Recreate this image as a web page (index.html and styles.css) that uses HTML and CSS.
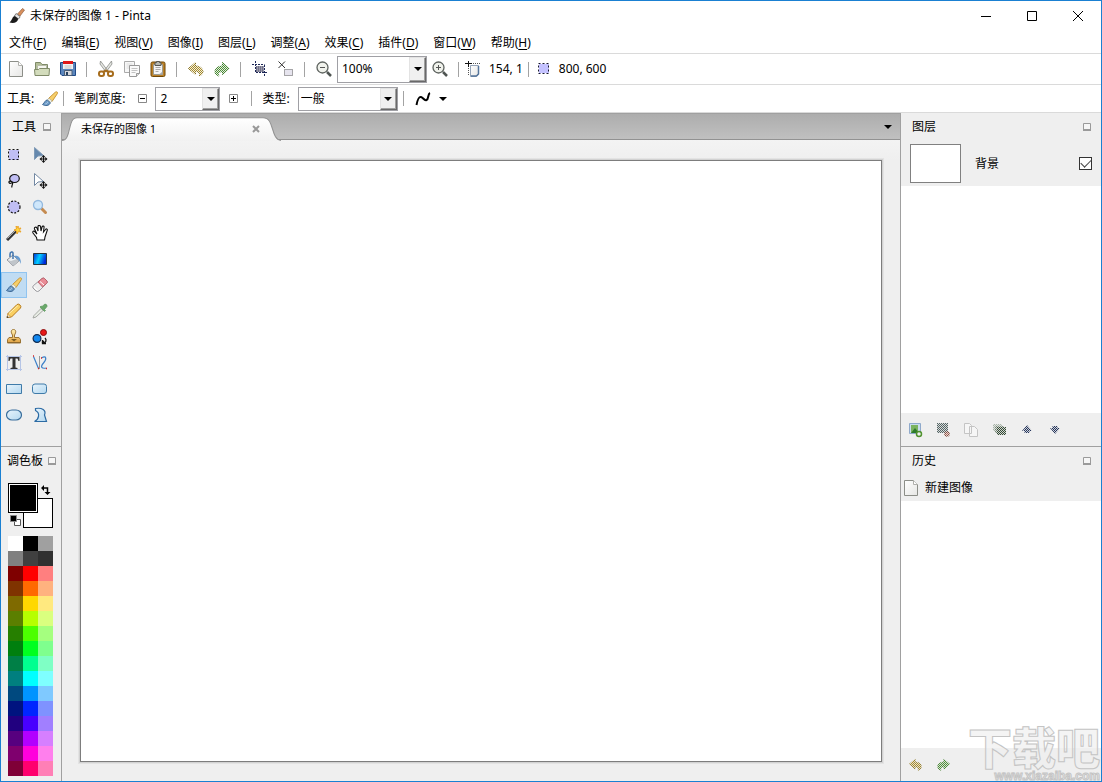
FILE: index.html
```html
<!DOCTYPE html>
<html lang="zh-CN">
<head>
<meta charset="utf-8">
<title>未保存的图像 1 - Pinta</title>
<link rel="stylesheet" href="styles.css">
</head>
<body>
<svg class="defs" aria-hidden="true">
  <defs>
    <linearGradient id="g-page" x1="0" y1="0" x2="1" y2="1"><stop offset="0" stop-color="#fff"/><stop offset="1" stop-color="#e6e6e4"/></linearGradient>
    <linearGradient id="g-tab" x1="0" y1="0" x2="0" y2="1"><stop offset="0" stop-color="#fff"/><stop offset="1" stop-color="#f1f1f1"/></linearGradient>
    <linearGradient id="g-blue" x1="0" y1="0" x2="1" y2=".3"><stop offset="0" stop-color="#0028d8"/><stop offset=".5" stop-color="#00d0ff"/><stop offset="1" stop-color="#0028d8"/></linearGradient>
    <linearGradient id="g-shape" x1="0" y1="0" x2="1" y2="1"><stop offset="0" stop-color="#e8f4fc"/><stop offset="1" stop-color="#b4d8f0"/></linearGradient>
    <linearGradient id="g-gold" x1="0" y1="0" x2="0" y2="1"><stop offset="0" stop-color="#fff0b0"/><stop offset="1" stop-color="#e0a040"/></linearGradient>
  </defs>
  <symbol id="i-page" viewBox="0 0 16 16"><path d="M1.500 .5h9l4 4v11h-13z" fill="url(#g-page)" stroke="#8c8e88"/><path d="M10.500 .5v4h4" fill="#fff" stroke="#b0b0ac"/></symbol>
  <symbol id="i-undo" viewBox="0 0 16 16"><path d="M.5 7.500 7.500 1.500v3.500C12 5 15 7.500 15 10.500c0 2-1.500 4-4 4.500 1.500-2 0-4.500-3.500-4.500v3z" fill="#a98c28" stroke="#86701c"/></symbol>
  <symbol id="i-redo" viewBox="0 0 16 16"><path d="M15.500 7.500 8.500 1.500v3.500C4 5 1 7.500 1 10.500c0 2 1.500 4 4 4.500-1.500-2 0-4.500 3.500-4.500v3z" fill="#4f9038" stroke="#3a7a26"/></symbol>
  <symbol id="i-brush" viewBox="0 0 16 16"><path d="M13.300 1.200c1.700-1 2.700 0 2 1.500L10 10.500 6.500 7.500z" fill="#f7cf6a" stroke="#c99738"/><path d="m5.500 8.800 2.900 2.600 1.800-1.400-3.200-2.700z" fill="#f2f2e6" stroke="#a8a898" stroke-width=".6"/><path d="M5.300 9C3 9 3 11.500.5 13.500 3 15.200 7.500 15 8.300 11.700z" fill="#6e9cc8" stroke="#35618f" stroke-width=".9"/><path d="M3.500 12.800c1.500 0 2-1 2.300-2" fill="none" stroke="#b9d2ea"/></symbol>
  <symbol id="i-cross" viewBox="0 0 16 16"><path d="M11.500 9v6M8.500 12h6" fill="none" stroke="#111"/><path d="m11.500 8 2 2.200h-4zM11.500 16l2-2.200h-4zM7.500 12l2.200-2v4zM15.500 12l-2.200-2v4z" fill="#111"/></symbol>
  <symbol id="i-pin" viewBox="0 0 8 8"><path d="M.5.500h7v7h-7z" fill="#f6f6f6" stroke="#9a9a9a"/><path d="M0 6h8v2H0z" fill="#9a9a9a"/></symbol>
  <symbol id="i-down" viewBox="0 0 8 4"><path d="M0 0h8L4 4z"/></symbol>
</svg>

<div class="window">
  <header class="titlebar">
    <svg class="icon" viewBox="0 0 16 16"><path d="m13.500.5 2 1.500L11 8 8.500 6z" fill="#d9905c" stroke="#8d5d40" stroke-width=".7"/><path d="m7 5.500 4.200 3.200L9.500 11 5.500 8z" fill="#e5e5e5" stroke="#666" stroke-width=".8"/><path d="M5.500 8C3 9 3.500 12 .5 14.500c4 1 8 .3 8.700-3.700z" fill="#1b1b1b"/></svg>
    <h1 class="title">未保存的图像 1 - Pinta</h1>
    <div class="window-buttons">
      <button class="window-button" type="button" aria-label="最小化"><svg viewBox="0 0 10 10"><path d="M0 5.500h10"/></svg></button>
      <button class="window-button" type="button" aria-label="最大化"><svg viewBox="0 0 10 10"><path d="M.5.5h9v9h-9z"/></svg></button>
      <button class="window-button" type="button" aria-label="关闭"><svg viewBox="0 0 10 10"><path d="m0 0 10 10M10 0 0 10"/></svg></button>
    </div>
  </header>

  <nav class="menubar" aria-label="菜单">
    <button type="button">文件(<u>F</u>)</button>
    <button type="button">编辑(<u>E</u>)</button>
    <button type="button">视图(<u>V</u>)</button>
    <button type="button">图像(<u>I</u>)</button>
    <button type="button">图层(<u>L</u>)</button>
    <button type="button">调整(<u>A</u>)</button>
    <button type="button">效果(<u>C</u>)</button>
    <button type="button">插件(<u>D</u>)</button>
    <button type="button">窗口(<u>W</u>)</button>
    <button type="button">帮助(<u>H</u>)</button>
  </nav>

  <div class="toolbar" role="toolbar" aria-label="常用">
    <button class="tool-button" type="button" aria-label="新建"><svg class="icon"><use href="#i-page"/></svg></button>
    <button class="tool-button" type="button" aria-label="打开"><svg class="icon" viewBox="0 0 16 16"><path d="M1.500 13.500v-12h5l1.500 2h5.500v5" fill="#b4bf98" stroke="#7f8a68"/><path d="M3.500 4.500h9v4h-9z" fill="#f6f6f0" stroke="#b7bca8"/><path d="M1 14.500.500 8.500h4l1-1h10l-.5 7z" fill="#d3dcbc" stroke="#7f8a68"/></svg></button>
    <button class="tool-button" type="button" aria-label="保存"><svg class="icon" viewBox="0 0 16 16"><path d="M.5 1.500h15v13H2l-1.500-1.500z" fill="#5b86bd" stroke="#204a87"/><path d="M3 1h10v7H3z" fill="#f4f4f4"/><path d="M3 0h10v3H3z" fill="#e01818"/><path d="M4.500 5h7M4.500 7h7" stroke="#c4c4c4"/><path d="M4.500 9.500h7.500v5H4.500z" fill="#d6d8dc" stroke="#4b5f78"/><path d="M6 11h2v3H6z" fill="#26405f"/></svg></button>
    <span class="separator"></span>
    <button class="tool-button" type="button" aria-label="剪切"><svg class="icon" viewBox="0 0 16 16"><path d="M2.500 0 10 10 8 11 2 3zM13.500 0 6 10l2 1 6-8z" fill="#e4e6e2" stroke="#8a8c88" stroke-width=".8"/><g fill="none" stroke="#a66c1c" stroke-width="2"><rect x="1" y="10.500" width="5" height="4.500" rx="2"/><rect x="10" y="10.500" width="5" height="4.500" rx="2"/><path d="m5 11 3-1.500 3 1.500"/></g></svg></button>
    <button class="tool-button" type="button" aria-label="复制"><svg class="icon" viewBox="0 0 16 16"><path d="M.5.5h10v11H.5z" fill="#f7f7f7" stroke="#aaa"/><path d="M2.500 3h6M2.500 5h6M2.500 7h6" stroke="#ddd"/><path d="M5.500 4.500h10v8l-3 3h-7z" fill="#fafafa" stroke="#989898"/><path d="M7.500 7.500h6M7.500 9.500h6M7.500 11.500h4" stroke="#c2c2c2"/><path d="M12.500 15.500v-3h3" fill="#ddd" stroke="#989898"/></svg></button>
    <button class="tool-button" type="button" aria-label="粘贴"><svg class="icon" viewBox="0 0 16 16"><rect x="1" y="1" width="14" height="14.500" rx="1.500" fill="#bb8128" stroke="#6f4706"/><path d="M3.500 3.500h9v10h-9z" fill="#f5f5f5" stroke="#9b9b92"/><path d="M5.500 6.500h5M5.500 8.500h5M5.500 10.500h3" stroke="#aaa"/><path d="M5 1.500h1.500v-1h3v1H11v3H5z" fill="#b5b7b3" stroke="#555753"/><path d="m9 13.500 3.500-3v3z" fill="#aaa"/></svg></button>
    <span class="separator"></span>
    <button class="tool-button" type="button" aria-label="撤销" disabled><svg class="icon"><use href="#i-undo"/></svg></button>
    <button class="tool-button" type="button" aria-label="重做" disabled><svg class="icon"><use href="#i-redo"/></svg></button>
    <span class="separator"></span>
    <button class="tool-button" type="button" aria-label="裁剪到选区"><svg class="icon" viewBox="0 0 16 16"><path d="M4 5h8v6H4z" fill="#9a9aac"/><path d="M4 6h8M4 8h8M4 10h8" stroke="#4a4a60" stroke-dasharray="1 1"/><path d="M0 3.500h12.500M3.500 0v11.500M12.500 4v11M4 11.500h11.500" fill="none" stroke="#1d2858" stroke-dasharray="2 1"/></svg></button>
    <button class="tool-button" type="button" aria-label="取消选择"><svg class="icon" viewBox="0 0 16 16"><path d="m.5.500 6.500 6.500M7 .5.500 7" stroke="#333"/><path d="M6.500 8.500h8v6h-8z" fill="#e6e4ee" stroke="#555" stroke-dasharray="1 1"/></svg></button>
    <span class="separator"></span>
    <button class="tool-button" type="button" aria-label="缩小"><svg class="icon" viewBox="0 0 16 16"><path d="m11 11 4 4" stroke="#4f5552" stroke-width="2.500"/><circle cx="6.500" cy="6.500" r="5.500" fill="#f0f2ec" stroke="#5d625e" stroke-width="1.300"/><path d="M4 6.500h5" stroke="#555"/></svg></button>
    <span class="combo zoom"><select aria-label="缩放"><option>100%</option></select><span class="combo-arrow"><svg><use href="#i-down"/></svg></span></span>
    <button class="tool-button" type="button" aria-label="放大"><svg class="icon" viewBox="0 0 16 16"><path d="m11 11 4 4" stroke="#4f5552" stroke-width="2.500"/><circle cx="6.500" cy="6.500" r="5.500" fill="#f0f2ec" stroke="#5d625e" stroke-width="1.300"/><path d="M4 6.500h5M6.500 4v5" stroke="#555"/></svg></button>
    <span class="separator"></span>
    <span class="readout"><svg class="icon" viewBox="0 0 16 16"><path d="M5.500 4.500h8v8l-2.500 3H5.500z" fill="url(#g-page)" stroke="#93a3b7"/><path d="M13.500 5v8l-2 2H6" fill="none" stroke="#54749a" stroke-width="1.500"/><path d="M0 2.500h7M3.500 0v6" stroke="#111"/><path d="M8 2.500h7M3.500 7v8" stroke="#555" stroke-dasharray="1 1"/></svg>154, 1</span>
    <span class="separator"></span>
    <span class="readout"><svg class="icon" viewBox="0 0 16 16"><path d="M4 3h10v9H4z" fill="#c4c2ff"/><path d="M3.500 2.500h10v10h-10z" fill="none" stroke="#1a1a30" stroke-dasharray="2 2"/></svg>800, 600</span>
  </div>

  <div class="toolbar options" role="toolbar" aria-label="工具选项">
    <span class="option-tool">工具:<svg class="icon"><use href="#i-brush"/></svg></span>
    <span class="separator"></span>
    <label class="option-label" for="brush-width">笔刷宽度:</label>
    <button class="step-button" type="button" aria-label="减小"><svg viewBox="0 0 9 9"><path d="M.5.5h8v8h-8z" fill="#fff" stroke="#888"/><path d="M2 4.500h5" stroke="#000"/></svg></button>
    <span class="combo width"><select id="brush-width"><option>2</option></select><span class="combo-arrow"><svg><use href="#i-down"/></svg></span></span>
    <button class="step-button" type="button" aria-label="增大"><svg viewBox="0 0 9 9"><path d="M.5.5h8v8h-8z" fill="#fff" stroke="#888"/><path d="M2 4.500h5M4.500 2v5" stroke="#000"/></svg></button>
    <span class="separator"></span>
    <label class="option-label" for="brush-type">类型:</label>
    <span class="combo type"><select id="brush-type"><option>一般</option></select><span class="combo-arrow"><svg><use href="#i-down"/></svg></span></span>
    <span class="separator"></span>
    <button class="curve-button" type="button" aria-label="抗锯齿"><svg class="icon" viewBox="0 0 16 16"><path d="M1.500 14C2.500 9 3.500 5.500 6 6s3 4 5.500 3S12.500 3 15 2" fill="none" stroke="#000" stroke-width="2"/></svg><svg class="small-arrow"><use href="#i-down"/></svg></button>
  </div>

  <main class="workspace">
    <aside class="side tools-side">
      <section class="panel">
        <div class="panel-head"><h2>工具</h2><button type="button" aria-label="停靠工具"><svg><use href="#i-pin"/></svg></button></div>
        <div class="tool-grid">
          <button type="button" aria-label="矩形选择"><svg class="icon" viewBox="0 0 16 16"><path d="M3 3h10v10H3z" fill="#c0bef4"/><path d="M2.500 2.500h10v10h-10z" fill="none" stroke="#111" stroke-dasharray="2 2"/></svg></button>
          <button type="button" aria-label="移动所选像素"><svg class="icon" viewBox="0 0 16 16"><path d="M2.500.5v12l3.500-3.500 5.500-.5z" fill="#6588ad" stroke="#7f9ab6"/><use href="#i-cross"/></svg></button>
          <button type="button" aria-label="套索选择"><svg class="icon" viewBox="0 0 16 16"><ellipse cx="8.500" cy="5.500" rx="4.800" ry="4" fill="#c0bef4" stroke="#111" stroke-width="1.200"/><path d="M6.500 9.500C4.500 7.500 2.500 8 3 9.500s3.500.5 3.500 0c1 2-1.500 2.500-.5 5" fill="none" stroke="#111" stroke-width="1.200"/></svg></button>
          <button type="button" aria-label="移动选区"><svg class="icon" viewBox="0 0 16 16"><path d="M2.500.5v12l3.500-3.500 5.500-.5z" fill="#fff" stroke="#7288a2"/><use href="#i-cross"/></svg></button>
          <button type="button" aria-label="椭圆选择"><svg class="icon" viewBox="0 0 16 16"><circle cx="8" cy="8" r="6" fill="#c0bef4" stroke="#111" stroke-width="1.200" stroke-dasharray="2 1.500"/></svg></button>
          <button type="button" aria-label="缩放"><svg class="icon" viewBox="0 0 16 16"><path d="m9.500 9.500 4 4" stroke="#c58b50" stroke-width="3" stroke-linecap="round"/><circle cx="6" cy="6" r="4.500" fill="#cfe7fb" stroke="#92b8de" stroke-width="1.300"/></svg></button>
          <button type="button" aria-label="魔棒"><svg class="icon" viewBox="0 0 16 16"><path d="m1 15 9-9" stroke="#333" stroke-width="3"/><path d="m1.500 13.500 8-8" stroke="#aaa"/><path d="m12 1 .5 2.500L15 3l-1.500 2L15 7l-2.500-.5L11 9l-.5-3L8 5l2.500-1L10 1l1.500 1.500z" fill="#ffd53a" stroke="#eca52a"/></svg></button>
          <button type="button" aria-label="平移"><svg class="icon" viewBox="0 0 16 16"><path d="M5 15 4.500 12.500 1 8C0 6 2 5.500 3 7l2 2L2.500 4C2 2 4 1.500 5 3l1 3L6 1.500C6 0 8 0 8.500 1.500L9 6l1-4c.5-1.500 2.500-1 2 .5L11.500 7l2-2.500c1-1.200 2.500-.3 1.500 1.500l-2 6-.5 3z" fill="#fff" stroke="#111" stroke-width="1.100"/></svg></button>
          <button type="button" aria-label="油漆桶"><svg class="icon" viewBox="0 0 16 16"><path d="m1 9 6-5 6 6-6 5z" fill="#edf0f2" stroke="#8a8e94"/><path d="m1 9 4 1 6-2 2 2-6 5z" fill="#c0c5ca"/><path d="M7 8V2c0-2-3-1-3 1v3" fill="none" stroke="#4175ae" stroke-width="1.500"/><path d="M8 5c4-1 7 1 7 8-1-2-1.500-4-4-5z" fill="#669bd0"/></svg></button>
          <button type="button" aria-label="渐变"><svg class="icon" viewBox="0 0 16 16"><path d="M1.500 2.500h13v11h-13z" fill="url(#g-blue)" stroke="#25343e"/></svg></button>
          <button type="button" class="selected" aria-label="画笔" aria-pressed="true"><svg class="icon"><use href="#i-brush"/></svg></button>
          <button type="button" aria-label="橡皮擦"><svg class="icon" viewBox="0 0 16 16"><path d="M10 1.500q1.500-1 2.500 0l2.500 2.500q.8 1.500-.5 2.500L7 14q-1.500 1-3 0l-3-3q-.8-1.200.5-2.500z" fill="#eee" stroke="#88888e" stroke-width=".8"/><path d="M10 1.500q1.500-1 2.500 0l2.500 2.500q.8 1.500-.5 2.500L10.500 10 6 5z" fill="#e98c96" stroke="#b9525e" stroke-width=".8"/><path d="m2 10 3.500 3.500M8 4.500 12 8" stroke="#fff"/></svg></button>
          <button type="button" aria-label="铅笔"><svg class="icon" viewBox="0 0 16 16"><path d="m1 14.500 1-4 9-9q1.500-1 3 .5t.5 3l-9 9z" fill="#f9cf62" stroke="#b87b1a"/><path d="m3 10.500 9-8" stroke="#fff2b8"/><path d="m2 10.500 1 2.500 2.500.5-4.500 1z" fill="#fff" stroke="#c28a35" stroke-width=".5"/><path d="m.7 15 .8-2 1.200 1.200z" fill="#222"/></svg></button>
          <button type="button" aria-label="取色器"><svg class="icon" viewBox="0 0 16 16"><path d="m1 15 1-2.500 7-7L11 7.500 4 14z" fill="#e8ece5" stroke="#9ea19c" stroke-width=".9"/><path d="m8 4 4.500 4.500L13.500 7.500l-1-1L15 3.500q.5-2-2-2.500l-3 2.500-1-.5z" fill="#69a86a" stroke="#5c955d" stroke-width=".7"/></svg></button>
          <button type="button" aria-label="克隆图章"><svg class="icon" viewBox="0 0 16 16"><path d="M6.500 8.500V6C4.500 3 5 .5 7.500.5S10.500 3 8.500 6v2.500H13l1.500 2v3.500h-13v-3.500L3 8.500z" fill="url(#g-gold)" stroke="#9b7434"/><path d="M2 13.500h12" stroke="#8f682c"/><path d="M5 10h6l-3 2.500z" fill="#7d5d20"/></svg></button>
          <button type="button" aria-label="重新着色"><svg class="icon" viewBox="0 0 16 16"><circle cx="11.500" cy="3.500" r="3" fill="#e81818" stroke="#8a0c0c"/><circle cx="5" cy="9.500" r="3.900" fill="#1288f0" stroke="#112b50" stroke-width="1.200"/><path d="M13 9c2 2 1 5-2 5M10 14l2-2M10.500 11v3.500H14" fill="none" stroke="#111" stroke-width="1.300"/></svg></button>
          <button type="button" aria-label="文本"><svg class="icon" viewBox="0 0 16 16"><path d="M1.500 0v16M14.500 0v16M0 14.500h16M0 1.500h16" stroke="#b6c5e6"/><path d="M2.500 2h11v4h-1l-1-2.500H9.500v9l2 .5v1h-7v-1l2-.5v-9h-2L3.500 6h-1z" fill="#333"/></svg></button>
          <button type="button" aria-label="直线/曲线"><svg class="icon" viewBox="0 0 16 16"><path d="m1.500 1.500 5 12M9.500 3c5-3 5.500 1 2 5s-2 6 3 5" fill="none" stroke="#3d80c8" stroke-width="1.200"/><path d="M7.500 1v13" stroke="#999"/><path d="M1 1h1M6 13.500h1M9 3h1M14 13.500h1" stroke="#d22" stroke-width="1.500"/></svg></button>
          <button type="button" aria-label="矩形"><svg class="icon" viewBox="0 0 16 16"><path d="M.5 3.500h15v9H.5z" fill="url(#g-shape)" stroke="#3f7ba9"/></svg></button>
          <button type="button" aria-label="圆角矩形"><svg class="icon" viewBox="0 0 16 16"><rect x=".5" y="3" width="14" height="9.500" rx="2.500" fill="url(#g-shape)" stroke="#3f7ba9"/></svg></button>
          <button type="button" aria-label="椭圆"><svg class="icon" viewBox="0 0 16 16"><rect x=".5" y="3" width="15" height="10" rx="5.500" fill="url(#g-shape)" stroke="#3a6f9d" stroke-width="1.200"/></svg></button>
          <button type="button" aria-label="自由形状"><svg class="icon" viewBox="0 0 16 16"><path d="M3.500 1.500C10 .5 14.500 3 12.500 8l2 6.500h-12C7 12.500 8.500 6 3.500 3.500z" fill="url(#g-shape)" stroke="#2c6ba4" stroke-width="1.200"/></svg></button>
        </div>
      </section>
      <section class="panel">
        <div class="panel-head palette-head"><h2>调色板</h2><button type="button" aria-label="停靠调色板"><svg><use href="#i-pin"/></svg></button></div>
        <div class="color-pair">
          <button class="color secondary" type="button" aria-label="背景色"></button>
          <button class="color primary" type="button" aria-label="前景色"></button>
          <button class="swap" type="button" aria-label="交换颜色"><svg viewBox="0 0 10 10"><path d="M1 3h5.500v5" fill="none" stroke="#000" stroke-width="1.500"/><path d="M0 3l3-3v6zM6.500 10l-3-3h6z"/></svg></button>
          <button class="reset" type="button" aria-label="重置颜色"><svg viewBox="0 0 11 11"><path d="M4.500 4.500h6v6h-6z" fill="#fff" stroke="#555"/><path d="M.5.5h6v6h-6z" fill="#000" stroke="#888"/></svg></button>
        </div>
        <div class="palette" id="palette"></div>
      </section>
    </aside>

    <section class="document">
      <div class="tabstrip">
        <div class="tab">
          <svg class="tab-shape" viewBox="0 0 220 27" preserveAspectRatio="none"><path d="M0 26.500C10 26 5 4.500 15 4.500H201C213 4.500 208 25 219 26.500V27H0z" fill="url(#g-tab)"/><path d="M0 26.500C10 26 5 4.500 15 4.500H201C213 4.500 208 25 219 26.500" fill="none" stroke="#929292"/></svg>
          <span class="tab-title">未保存的图像 1</span>
          <button class="tab-close" type="button" aria-label="关闭标签"><svg viewBox="0 0 8 8"><path d="m1 1 6 6M7 1 1 7" stroke="#999" stroke-width="2"/></svg></button>
        </div>
        <button class="tab-menu" type="button" aria-label="标签列表"><svg class="small-arrow"><use href="#i-down"/></svg></button>
      </div>
      <div class="viewport"><div class="canvas"></div></div>
    </section>

    <aside class="side info-side">
      <section class="panel">
        <div class="panel-head"><h2>图层</h2><button type="button" aria-label="停靠图层"><svg><use href="#i-pin"/></svg></button></div>
        <div class="list">
          <div class="layer"><span class="thumb"></span><label for="layer-visible">背景</label><input id="layer-visible" type="checkbox" checked></div>
        </div>
        <div class="panel-actions">
          <button type="button" aria-label="添加图层"><svg class="icon" viewBox="0 0 16 16"><path d="M2.500 1.500h11v10h-11z" fill="#c9dded" stroke="#8fa9cb"/><path d="M4 3h7v8H4z" fill="#7bb35f"/><path d="M8 6 4 11h8z" fill="#2d7a2b"/><circle cx="12" cy="12" r="2.500" fill="#efefef" stroke="#4f922e" stroke-width="1.500"/></svg></button>
          <button type="button" aria-label="删除图层" disabled><svg class="icon" viewBox="0 0 16 16"><path d="M2 1h11v10H2z" fill="#566"/><circle cx="12" cy="12" r="2" fill="#b87060" stroke="#84483a" stroke-width="1.500"/></svg></button>
          <button type="button" aria-label="复制图层"><svg class="icon" viewBox="0 0 16 16"><path d="M1.500 1.500h5l2 2v8h-7zM6.500 4.500h5l3 3v7h-8z" fill="#f6f6f6" stroke="#c4c4c4"/></svg></button>
          <button type="button" aria-label="合并图层" disabled><svg class="icon" viewBox="0 0 16 16"><path d="M2 2h9v7H2z" fill="#a8b4a8"/><path d="M4 4h9v7H4z" fill="#758575"/><path d="M6 5h9v8H6z" fill="#334a33"/></svg></button>
          <button type="button" aria-label="上移图层" disabled><svg class="icon" viewBox="0 0 16 16"><path d="m8 3 5 6h-2.500v2h-5V9H3z" fill="#24345c"/></svg></button>
          <button type="button" aria-label="下移图层" disabled><svg class="icon" viewBox="0 0 16 16"><path d="m8 12 5-6h-2.500V4h-5v2H3z" fill="#24345c"/></svg></button>
        </div>
      </section>
      <section class="panel">
        <div class="panel-head"><h2>历史</h2><button type="button" aria-label="停靠历史"><svg><use href="#i-pin"/></svg></button></div>
        <div class="list">
          <div class="history-item"><svg class="icon"><use href="#i-page"/></svg>新建图像</div>
        </div>
        <div class="panel-actions">
          <button type="button" aria-label="撤销" disabled><svg class="icon history-icon"><use href="#i-undo"/></svg></button>
          <button type="button" aria-label="重做" disabled><svg class="icon history-icon"><use href="#i-redo"/></svg></button>
        </div>
      </section>
    </aside>
  </main>
  <div class="watermark"><span class="watermark-name">下载吧</span><span class="watermark-url">www.xiazaiba.com</span></div>
</div>
<script src="script.js"></script>
</body>
</html>
```
FILE: styles.css
```css
* { box-sizing: border-box; }
body {
  margin: 0;
  color: #000;
  font: 12px/16px "Noto Sans", "Noto Sans CJK SC", sans-serif;
}
button {
  margin: 0;
  padding: 0;
  border: 0;
  background: none;
  color: inherit;
  font: inherit;
  display: flex;
  align-items: center;
  justify-content: center;
}
svg { display: block; flex: none; }
h1, h2 { margin: 0; font: inherit; }
.defs { position: absolute; width: 0; height: 0; }
.icon { width: 16px; height: 16px; }
button:disabled .icon {
  -webkit-mask: repeating-conic-gradient(#000 0 25%, rgba(0, 0, 0, 0.15) 0 50%) 0 0 / 2px 2px;
  mask: repeating-conic-gradient(#000 0 25%, rgba(0, 0, 0, 0.15) 0 50%) 0 0 / 2px 2px;
}

.window {
  position: relative;
  display: flex;
  flex-direction: column;
  height: 100vh;
  overflow: hidden;
  border: 1px solid #1a80d2;
  background: #fff;
}

.titlebar { display: flex; align-items: center; height: 30px; padding-left: 8px; }
.title { margin-left: 5px; }
.window-buttons { display: flex; margin-left: auto; }
.window-button { width: 46px; height: 28px; }
.window-button svg { width: 10px; height: 10px; overflow: visible; fill: none; stroke: #000; }

.menubar { display: flex; gap: 15px; height: 23px; padding: 2px 0 0 8px; border-bottom: 1px solid #dadada; }
.menubar u { text-underline-offset: 2px; }

.toolbar { display: flex; align-items: center; height: 31px; padding-left: 2px; border-bottom: 1px solid #dadada; }
.tool-button { width: 26px; height: 26px; }
.separator { flex: none; width: 12px; height: 15px; background: linear-gradient(#a3a3a3, #a3a3a3) 5px 0 / 1px 100% no-repeat; }
.readout { display: flex; align-items: center; gap: 8px; }

.options { height: 28px; padding-left: 6px; }
.option-tool { display: flex; align-items: center; gap: 8px; }
.option-label { margin: 0 4px; }
.step-button { width: 26px; height: 24px; }
.step-button svg { width: 9px; height: 9px; }
.curve-button { gap: 8px; margin-left: 5px; }
.small-arrow { width: 8px; height: 4px; }

.combo { display: grid; height: 24px; border: 1px solid #a0a0a5; background: #fff; }
.combo select {
  grid-area: 1 / 1;
  width: 100%;
  min-width: 0;
  padding: 0 20px 0 4px;
  border: 0;
  outline: 0;
  appearance: none;
  background: none;
  color: #000;
  font: inherit;
}
.combo-arrow {
  grid-area: 1 / 1;
  justify-self: end;
  display: flex;
  align-items: center;
  justify-content: center;
  width: 17px;
  border: 1px solid;
  border-color: #e3e3e3 #696969 #696969 #e3e3e3;
  box-shadow: inset -1px -1px #a0a0a0;
  background: #f0f0f0;
  pointer-events: none;
}
.combo-arrow svg { width: 8px; height: 4px; }
.zoom { width: 90px; height: 27px; }
.width { width: 65px; }
.type { width: 100px; margin-left: 4px; }
.type select { padding-left: 2px; }

.workspace { flex: 1; display: grid; grid-template-columns: 61px 1fr 201px; min-height: 0; background: #efefef; }
.side { display: grid; grid-template-rows: calc(50% - 1px) 1fr; min-height: 0; }
.tools-side { border-right: 1px solid #a0a0a0; }
.info-side { border-left: 1px solid #a0a0a0; }
.panel { display: flex; flex-direction: column; min-width: 0; min-height: 0; }
.panel + .panel { border-top: 1px solid #a0a0a0; }
.panel-head { display: flex; align-items: center; justify-content: space-between; height: 28px; padding: 0 10px 0 11px; }
.panel-head svg { width: 8px; height: 8px; }
.panel .palette-head { padding: 0 5px 0 6px; }

.tool-grid { display: grid; grid-template-columns: 26px 26px; grid-auto-rows: 26px; padding-top: 1px; }
.tool-grid .selected { border: 1px solid #90c4f0; background: #c0dcf3; }

.color-pair { position: relative; height: 45px; margin: 8px 7px; }
.color { position: absolute; width: 30px; height: 30px; border: 1px solid #000; }
.secondary { left: 15px; top: 15px; background: #fff; }
.primary { left: 0; top: 0; background: #000; box-shadow: inset 0 0 0 1px #fff; }
.swap { position: absolute; left: 33px; top: 2px; }
.swap svg { width: 10px; height: 10px; }
.reset { position: absolute; left: 2px; top: 32px; }
.reset svg { width: 11px; height: 11px; }
.palette { display: grid; grid-template-columns: repeat(3, 15px); grid-auto-rows: 15px; margin-left: 7px; }

.document { display: flex; flex-direction: column; min-width: 0; }
.tabstrip {
  display: flex;
  justify-content: space-between;
  height: 27px;
  border-top: 1px solid #a0a0a0;
  border-bottom: 1px solid #929292;
  background: linear-gradient(#adadad, #c0c0c0);
}
.tab { position: relative; display: flex; align-items: center; justify-content: space-between; width: 220px; padding: 5px 22px 0 19px; }
.tab-shape { position: absolute; left: 0; top: -1px; width: 220px; height: 28px; }
.tab-title, .tab-close { position: relative; }
.tab-title { font-size: 11px; }
.tab-close svg { width: 8px; height: 8px; }
.tab-menu { width: 24px; }
.viewport { flex: 1; display: flex; padding: 20px 18px 19px; background: linear-gradient(#f3f3f3, #efefef 20px); }
.canvas { flex: 1; border: 1px solid #7d7d7d; background: #fff; box-shadow: 0 0 0 1px #d2d2d2, 0 0 0 2px #e3e3e3; }

.list { flex: 1; background: #fff; }
.layer { display: flex; align-items: center; height: 45px; padding: 0 9px; background: #efefef; }
.thumb { width: 51px; height: 39px; border: 1px solid #808080; background: #fff; }
.layer label { margin-left: 14px; }
.layer input {
  appearance: none;
  display: grid;
  place-items: center;
  width: 13px;
  height: 13px;
  margin: 0 0 0 auto;
  border: 1px solid #333;
  background: #fff;
}
.layer input:checked::before {
  content: "";
  width: 9px;
  height: 5px;
  margin-bottom: 3px;
  border: solid #444;
  border-width: 0 0 1px 1px;
  transform: rotate(-45deg);
}
.history-item { display: flex; align-items: center; gap: 6px; height: 26px; padding-left: 2px; background: #efefef; }
.panel-actions { display: flex; height: 33px; }
.panel-actions button { width: 28px; }
.panel-actions .history-icon { width: 13px; height: 13px; }

.watermark {
  position: absolute;
  right: 1px;
  bottom: 0;
  display: flex;
  flex-direction: column;
  align-items: flex-end;
  color: rgba(240, 240, 240, 0.7);
  font-weight: 900;
  white-space: nowrap;
  pointer-events: none;
  -webkit-text-stroke: 1px #c4c4c4;
}
.watermark-name { font-size: 44px; line-height: 46px; }
.watermark-url { font: 700 12px/10px "Liberation Sans", sans-serif; }
```
FILE: script.js
```js
const colors = [
  'ffffff', '000000', 'a0a0a0', '808080', '404040', '303030',
  '7f0000', 'ff0000', 'ff7f7f', '7f3300', 'ff6a00', 'ffb27f',
  '7f6a00', 'ffd800', 'ffe97f', '5b7f00', 'b6ff00', 'daff7f',
  '267f00', '4cff00', 'a5ff7f', '007f0e', '00ff21', '7fff8e',
  '007f46', '00ff90', '7fffc5', '007f7f', '00ffff', '7fffff',
  '00497f', '0094ff', '7fc9ff', '00137f', '0026ff', '7f92ff',
  '21007f', '4800ff', 'a17fff', '57007f', 'b200ff', 'd67fff',
  '7f006e', 'ff00dc', 'ff7fed', '7f0037', 'ff006e', 'ff7fb6',
];
const palette = document.getElementById('palette');
for (const color of colors) {
  const button = document.createElement('button');
  button.type = 'button';
  button.setAttribute('aria-label', '#' + color);
  button.style.backgroundColor = '#' + color;
  palette.append(button);
}
```
